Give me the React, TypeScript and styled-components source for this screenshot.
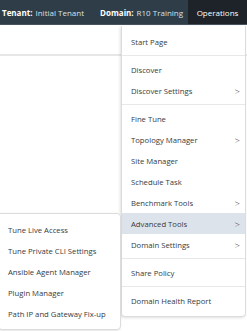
import React from 'react'
import styled, { createGlobalStyle } from 'styled-components'

const GlobalStyle = createGlobalStyle`
  html, body {
    margin: 0;
    padding: 0;
    background: #ffffff;
    font-family: "Open Sans", "DejaVu Sans", sans-serif;
  }
`

const Page = styled.div`
  position: relative;
  width: 247px;
  height: 331px;
  overflow: hidden;
  background: #ffffff;
`

const TopBar = styled.div`
  display: flex;
  align-items: stretch;
  height: 25px;
  background: #2e3d47;
  border-bottom: 1px solid #47545c;
  box-sizing: border-box;
  color: #ffffff;
  font-size: 8px;
`

const Info = styled.div<{ $gap?: number }>`
  display: flex;
  align-items: center;
  gap: 3px;
  margin-left: ${(p) => p.$gap ?? 0}px;
  white-space: nowrap;
`

const Label = styled.span`
  font-weight: 700;
  color: #ffffff;
`

const Value = styled.span`
  color: #d6e2ec;
`

const Ops = styled.div`
  margin-left: auto;
  width: 59px;
  display: flex;
  align-items: center;
  justify-content: center;
  background: #1d2328;
  color: #ffffff;
`

const Header = styled.div`
  height: 29px;
  border-bottom: 2px solid #e6e6e6;
`

const Menu = styled.div`
  position: absolute;
  top: 26px;
  left: 121px;
  width: 125px;
  padding: 5px 0;
  background: #ffffff;
  border: 1px solid #dcdcdc;
  border-top: none;
  border-radius: 0 0 4px 4px;
  box-shadow: -1px 1px 3px rgba(0, 0, 0, 0.12);
  box-sizing: border-box;
`

const SubMenu = styled(Menu)`
  top: 213px;
  left: -2px;
  width: 123px;
  border-top: 1px solid #dcdcdc;
  border-radius: 0 4px 4px 4px;
`

const Item = styled.div<{ $active?: boolean; $indent?: number }>`
  display: flex;
  align-items: center;
  justify-content: space-between;
  height: 21px;
  padding: 0 5px 0 ${(p) => p.$indent ?? 9}px;
  font-size: 7.7px;
  color: #353b41;
  background: ${(p) => (p.$active ? '#dde3ea' : 'transparent')};
  white-space: nowrap;
`

const Arrow = styled.span`
  font-size: 9.5px;
  line-height: 1;
  margin-top: 2px;
  font-weight: 300;
  color: #444;
`

const Divider = styled.div`
  height: 1px;
  margin: 3px 0;
  background: #e8e8e8;
`

type Entry = { label: string; sub?: boolean; active?: boolean } | 'sep'

const mainItems: Entry[] = [
  { label: 'Start Page' },
  'sep',
  { label: 'Discover' },
  { label: 'Discover Settings', sub: true },
  'sep',
  { label: 'Fine Tune' },
  { label: 'Topology Manager', sub: true },
  { label: 'Site Manager' },
  { label: 'Schedule Task' },
  { label: 'Benchmark Tools', sub: true },
  { label: 'Advanced Tools', sub: true, active: true },
  { label: 'Domain Settings', sub: true },
  'sep',
  { label: 'Share Policy' },
  'sep',
  { label: 'Domain Health Report' },
]

const advancedItems = [
  'Tune Live Access',
  'Tune Private CLI Settings',
  'Ansible Agent Manager',
  'Plugin Manager',
  'Path IP and Gateway Fix-up',
]

export default function App() {
  return (
    <Page>
      <GlobalStyle />
      <TopBar>
        <Info $gap={2}>
          <Label>Tenant:</Label>
          <Value>Initial Tenant</Value>
        </Info>
        <Info $gap={16}>
          <Label>Domain:</Label>
          <Value>R10 Training</Value>
        </Info>
        <Ops>Operations</Ops>
      </TopBar>
      <Header />

      <Menu>
        {mainItems.map((it, i) =>
          it === 'sep' ? (
            <Divider key={i} />
          ) : (
            <Item key={i} $active={it.active}>
              <span>{it.label}</span>
              {it.sub && <Arrow>&gt;</Arrow>}
            </Item>
          )
        )}
      </Menu>

      <SubMenu>
        {advancedItems.map((label) => (
          <Item key={label} $indent={9}>
            <span>{label}</span>
          </Item>
        ))}
      </SubMenu>
    </Page>
  )
}
